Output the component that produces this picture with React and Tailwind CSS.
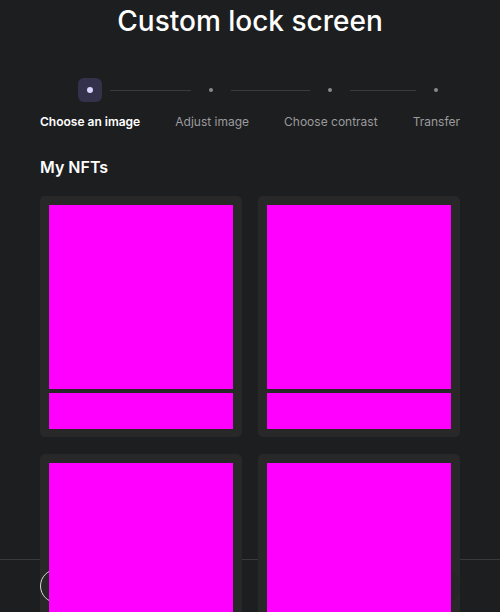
import React from "react";

const steps = ["Choose an image", "Adjust image", "Choose contrast", "Transfer"];
const nfts = [1, 2, 3, 4];

const NftCard = () => {
  return (
    <div className="bg-[#282828] rounded-[5px] pt-[9px] px-[9px] pb-[8px] flex flex-col gap-[4px]">
      <div className="relative bg-[#ff00ff] w-[184px] h-[184px]"></div>
      <div className="relative bg-[#ff00ff] w-[184px] h-[36px]"></div>
    </div>
  );
};

const App = () => {
  return (
    <div
      className="h-[612px] bg-[#1d1e20] text-white"
      style={{ fontFamily: "Inter, 'Noto Sans', sans-serif" }}
    >
      <div className="h-[559px] px-10">
        <h1 className="text-center text-[28px] font-medium leading-[40px] pt-[1px]">Custom lock screen</h1>

        <div className="mt-[37px] flex items-center pl-[38px]">
          <div className="w-6 h-6 rounded-[6px] bg-[#34324a] flex items-center justify-center">
            <div className="w-[6px] h-[6px] rounded-full bg-[#d8d3ff]"></div>
          </div>
          <div className="mx-2 w-[81px] h-px bg-[#3c3c3e]"></div>
          <div className="w-6 h-6 flex items-center justify-center">
            <div className="w-1 h-1 rounded-full bg-[#8a8a8c]"></div>
          </div>
          <div className="mx-2 w-[79px] h-px bg-[#3c3c3e]"></div>
          <div className="w-6 h-6 flex items-center justify-center">
            <div className="w-1 h-1 rounded-full bg-[#8a8a8c]"></div>
          </div>
          <div className="mx-2 w-[66px] h-px bg-[#3c3c3e]"></div>
          <div className="w-6 h-6 flex items-center justify-center">
            <div className="w-1 h-1 rounded-full bg-[#8a8a8c]"></div>
          </div>
        </div>

        <div className="mt-[12px] flex justify-between text-[12px] leading-4">
          {steps.map((s, i) => (
            <span key={s} className={i === 0 ? "font-semibold text-white" : "text-[#9b9b9d]"}>
              {s}
            </span>
          ))}
        </div>

        <h2 className="mt-[27px] text-[16px] font-semibold leading-5">My NFTs</h2>

        <div className="mt-[19px] grid grid-cols-2 gap-x-4 gap-y-[17px]">
          {nfts.map((n) => (
            <NftCard key={n} />
          ))}
        </div>
      </div>

      <div className="h-[53px] bg-[#1d1e20] border-t border-[#3a3a3c] px-10 flex items-center justify-between">
        <button className="h-[34px] w-[150px] rounded-full border border-[#d9d9d9] text-sm text-white">Back</button>
        <button className="h-[34px] w-[150px] rounded-full bg-[#262628] text-sm text-[#777]">Next</button>
      </div>
    </div>
  );
};

export default App;
